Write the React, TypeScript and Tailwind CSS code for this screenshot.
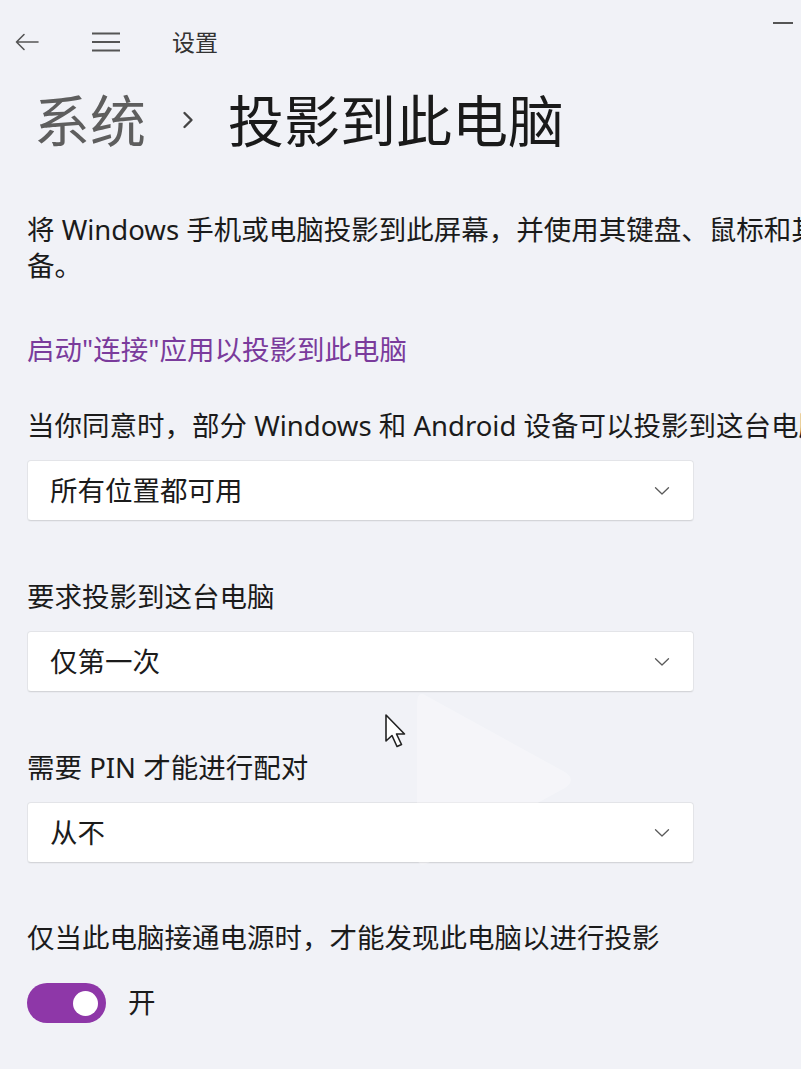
import React from "react";

function Chevron() {
  return (
    <svg width="16" height="10" viewBox="0 0 16 10" fill="none">
      <path d="M1.5 1.8 L8 8 L14.5 1.8" stroke="#5a5a5a" strokeWidth="1.3" strokeLinecap="round" strokeLinejoin="round" />
    </svg>
  );
}

function Dropdown({ value }: { value: string }) {
  return (
    <div className="w-[667px] h-[61px] bg-white rounded-[4px] border border-[#e3e4e8] border-b-[#d4d5d9] flex items-center justify-between pl-[22px] pr-[23px] shadow-[0_1px_1px_rgba(0,0,0,0.03)]">
      <span className="text-[27.5px] leading-none text-[#1b1b1b]">{value}</span>
      <Chevron />
    </div>
  );
}

export default function App() {
  return (
    <div
      className="relative w-[801px] h-[1069px] overflow-hidden bg-[#f1f2f7] text-[#1b1b1b]"
      style={{ fontFamily: '"Noto Sans", "Noto Sans CJK SC", sans-serif' }}
    >
      {/* minimize */}
      <div className="absolute left-[773px] top-[22px] w-[20px] h-[2px] bg-[#555]" />

      {/* top bar */}
      <div className="flex items-center h-[84px]">
        <div className="w-[60px] pl-[15px] flex items-center">
          <svg width="24" height="18" viewBox="0 0 24 18" fill="none">
            <path d="M23 9 H1.5 M9 1.5 L1.5 9 L9 16.5" stroke="#555" strokeWidth="1.6" strokeLinecap="round" strokeLinejoin="round" />
          </svg>
        </div>
        <div className="w-[80px] pl-[31px] flex items-center">
          <svg width="30" height="20" viewBox="0 0 30 20" fill="none">
            <path d="M1 1.5 H29 M1 10 H29 M1 18.5 H29" stroke="#555" strokeWidth="1.8" />
          </svg>
        </div>
        <span className="ml-[32px] text-[23px] leading-none text-[#333]">设置</span>
      </div>

      <div className="pl-[27px] w-[900px]">
        {/* title */}
        <div className="flex items-center h-[72px] pl-[7px] text-[56px] leading-none">
          <span className="text-[#5e5e5e]">系统</span>
          <svg className="ml-[36px] mr-[34px]" width="12" height="20" viewBox="0 0 12 20" fill="none">
            <path d="M2.5 3 L9.5 10 L2.5 17" stroke="#444" strokeWidth="2.4" strokeLinecap="round" strokeLinejoin="round" />
          </svg>
          <span className="text-[#1a1a1a]">投影到此电脑</span>
        </div>

        {/* description */}
        <div className="mt-[56px] text-[27.5px] leading-[36px] whitespace-nowrap">
          将 Windows 手机或电脑投影到此屏幕，并使用其键盘、鼠标和其他设
          <br />
          备。
        </div>

        {/* link */}
        <div className="mt-[48px] text-[27.5px] leading-[36px] text-[#7a3b9c] whitespace-nowrap">
          启动"连接"应用以投影到此电脑
        </div>

        {/* setting 1 */}
        <div className="mt-[40px] text-[27.5px] leading-[36px] whitespace-nowrap">
          当你同意时，部分 Windows 和 Android 设备可以投影到这台电脑
        </div>
        <div className="mt-[16px]">
          <Dropdown value="所有位置都可用" />
        </div>

        {/* setting 2 */}
        <div className="mt-[58px] text-[27.5px] leading-[36px] whitespace-nowrap">要求投影到这台电脑</div>
        <div className="mt-[16px]">
          <Dropdown value="仅第一次" />
        </div>

        {/* setting 3 */}
        <div className="mt-[58px] text-[27.5px] leading-[36px] whitespace-nowrap">需要 PIN 才能进行配对</div>
        <div className="mt-[16px]">
          <Dropdown value="从不" />
        </div>

        {/* setting 4 */}
        <div className="mt-[57px] text-[27.5px] leading-[36px] whitespace-nowrap">
          仅当此电脑接通电源时，才能发现此电脑以进行投影
        </div>
        <div className="mt-[27px] flex items-center">
          <div className="w-[79px] h-[40px] rounded-full bg-[#8e37a8] flex items-center justify-end pr-[8px]">
            <div className="w-[25px] h-[25px] rounded-full bg-white" />
          </div>
          <span className="ml-[22px] text-[27.5px] leading-none">开</span>
        </div>
      </div>

      {/* faint play overlay */}
      <svg className="absolute left-[405px] top-[680px] pointer-events-none" width="180" height="200" viewBox="0 0 180 200" fill="none">
        <path d="M20 15 Q12 10 12 25 L12 175 Q12 190 25 182 L160 108 Q172 100 160 92 Z" fill="white" opacity="0.28" />
      </svg>

      {/* cursor */}
      <svg className="absolute left-[384px] top-[713px]" width="26" height="40" viewBox="0 0 26 40" fill="none">
        <path d="M2 2 L2 28 L8 22.5 L13 33.5 L17.5 31.5 L12.5 21 L20.5 21 Z" fill="white" stroke="#222" strokeWidth="1.6" strokeLinejoin="round" />
      </svg>
    </div>
  );
}
